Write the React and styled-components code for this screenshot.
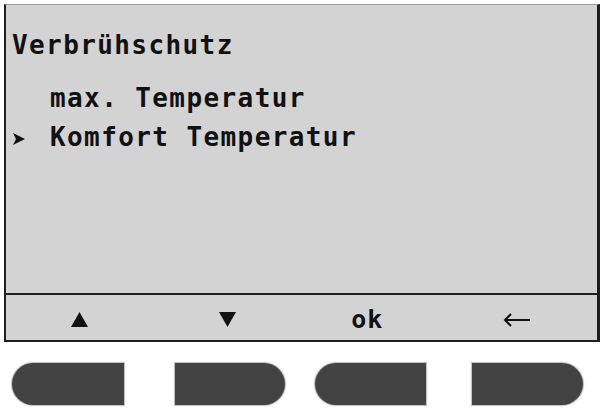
import React from "react";
import styled, { createGlobalStyle } from "styled-components";

const Global = createGlobalStyle`
  html, body { margin: 0; padding: 0; background: #ffffff; }
  body { width: 603px; height: 410px; overflow: hidden; }
`;

const Device = styled.div`
  display: flex;
  flex-direction: column;
  padding: 4px 0 0 4px;
`;

const Screen = styled.div`
  width: 591px;
  height: 335px;
  background: #d3d3d3;
  border-top: 1px solid #9a9a9a;
  border-left: 2px solid #1e1e1e;
  border-right: 3px solid #1e1e1e;
  border-bottom: 2px solid #1e1e1e;
  display: flex;
  flex-direction: column;
  font-family: "DejaVu Sans Mono", "Liberation Mono", monospace;
  font-weight: bold;
  font-size: 26px;
  letter-spacing: 1.4px;
  color: #111;
`;

const Content = styled.div`
  flex: 1;
  display: flex;
  flex-direction: column;
  padding: 28px 0 0 6px;
`;

const Title = styled.div`
  line-height: 24px;
  margin-bottom: 22px;
`;

const Item = styled.div`
  display: grid;
  grid-template-columns: 38px 1fr;
  align-items: center;
  line-height: 39px;
  height: 39px;
`;

const Marker = styled.span`
  display: flex;
  align-items: center;
  padding-top: 3px;
  padding-left: 1px;
  visibility: ${(p) => (p.$active ? "visible" : "hidden")};
`;

const Footer = styled.div`
  height: 45px;
  border-top: 2px solid #1e1e1e;
  display: grid;
  grid-template-columns: repeat(4, 1fr);
  align-items: center;
`;

const SoftKey = styled.div`
  display: flex;
  justify-content: center;
  align-items: center;
  padding-top: 4px;
  transform: translateX(${(p) => p.$shift || 0}px);
  font-size: 25px;
  letter-spacing: 1px;
`;

const Keys = styled.div`
  display: flex;
  margin-top: 21px;
`;

const Key = styled.div`
  width: ${(p) => p.$w}px;
  height: 42px;
  margin-left: ${(p) => p.$offset}px;
  background: #434343;
  box-shadow: 0 0 1px 1px rgba(120, 120, 120, 0.5);
  border-radius: ${(p) => (p.$round === "left" ? "21px 0 0 21px" : "0 21px 21px 0")};
`;

const Arrow = () => (
  <svg width="12" height="12" viewBox="0 0 12 12">
    <polygon points="0,0 12,6 0,12 3,6" fill="#111" />
  </svg>
);

const Up = () => (
  <svg width="17" height="15" viewBox="0 0 17 15">
    <polygon points="8.5,0 17,15 0,15" fill="#111" />
  </svg>
);

const Down = () => (
  <svg width="17" height="15" viewBox="0 0 17 15">
    <polygon points="0,0 17,0 8.5,15" fill="#111" />
  </svg>
);

const Back = () => (
  <svg width="28" height="14" viewBox="0 0 28 14">
    <path d="M2 7 H27 M8 1 L2 7 L8 13" stroke="#111" strokeWidth="2" fill="none" />
  </svg>
);

const items = [
  { label: "max. Temperatur", active: false },
  { label: "Komfort Temperatur", active: true },
];

export default function App() {
  return (
    <>
      <Global />
      <Device>
        <Screen>
          <Content>
            <Title>Verbrühschutz</Title>
            {items.map((it) => (
              <Item key={it.label}>
                <Marker $active={it.active}>
                  <Arrow />
                </Marker>
                <span>{it.label}</span>
              </Item>
            ))}
          </Content>
          <Footer>
            <SoftKey><Up /></SoftKey>
            <SoftKey><Down /></SoftKey>
            <SoftKey $shift={-8}>ok</SoftKey>
            <SoftKey $shift={-6}><Back /></SoftKey>
          </Footer>
        </Screen>
        <Keys>
          <Key $w={112} $offset={8} $round="left" />
          <Key $w={110} $offset={51} $round="right" />
          <Key $w={111} $offset={30} $round="left" />
          <Key $w={111} $offset={46} $round="right" />
        </Keys>
      </Device>
    </>
  );
}
